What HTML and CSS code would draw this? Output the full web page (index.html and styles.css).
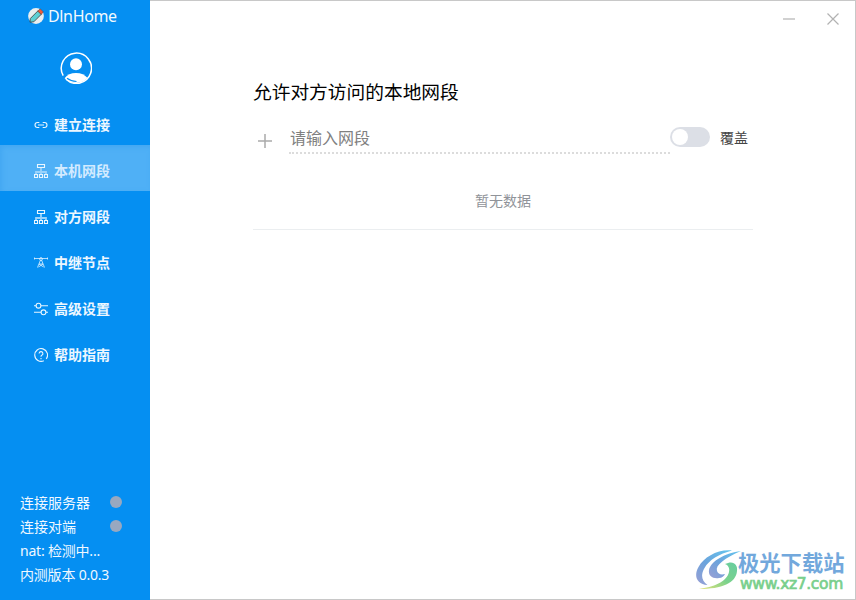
FILE: index.html
```html
<!DOCTYPE html>
<html lang="zh-CN">
<head>
<meta charset="utf-8">
<title>DlnHome</title>
<link rel="stylesheet" href="styles.css">
</head>
<body>
<div class="app">
  <aside class="sidebar">
    <div class="brand">
      <svg class="brand-logo" viewBox="0 0 16 16">
        <circle cx="8" cy="8" r="7.900" fill="#e9eff0"/>
        <path d="M2.300 10.500 10 2.800l3.400 3.400-7.600 7.600-3.800.4z" fill="#5ed0d4" stroke="#3c3b3b" stroke-width=".8"/>
        <path d="M9.700 3.100 12.200.9l3 3-2 2.600z" fill="#ef5b3c" stroke="#6c3b2b" stroke-width=".6"/>
      </svg>
      <span class="brand-name">DlnHome</span>
    </div>
    <svg class="avatar" viewBox="0 0 32 32">
      <path d="M3.200 23.600A15.100 15.100 0 1 1 6 27.200" fill="none" stroke="#fff" stroke-width="1.500"/>
      <circle cx="16" cy="12.200" r="6" fill="#fff"/>
      <path d="M4.600 26.200C7 22.800 11 20.900 16 20.900s9 1.900 11.600 5.200C24.700 29.300 20.500 31 16 31S7.300 29.300 4.600 26.200z" fill="#fff"/>
      <path d="M7 26.300c2.500 2 5.500 3 9.500 3.200" fill="none" stroke="#058ff2" stroke-width="1.200"/>
    </svg>
    <nav class="menu">
      <a class="item"><svg class="icon" viewBox="0 0 14 14"><path d="M5.300 4.500H3.500a2.500 2.500 0 0 0 0 5h1.800M8.700 4.500h1.800a2.500 2.500 0 0 1 0 5H8.700M4 7h6"/></svg>建立连接</a>
      <a class="item active"><svg class="icon" viewBox="0 0 14 14"><path class="dim" d="M7 4v6M2 10V8h10v2"/><path d="M3.500 .5h7v3h-7zM.5 10.500h3v3h-3zM5.500 10.500h3v3h-3zM10.500 10.500h3v3h-3z"/></svg>本机网段</a>
      <a class="item"><svg class="icon" viewBox="0 0 14 14"><path class="dim" d="M7 4v6M2 10V8h10v2"/><path d="M3.500 .5h7v3h-7zM.5 10.500h3v3h-3zM5.500 10.500h3v3h-3zM10.500 10.500h3v3h-3z"/></svg>对方网段</a>
      <a class="item"><svg class="icon thin" viewBox="0 0 14 14"><path d="M0 2.500h14M.5 1.500v2M13.500 1.500v2M6.500 4 3.500 11.500M7.500 4l3 7.500M5 8l4.500 3M9 8l-4.500 3M5 8h4"/><circle cx="7" cy="3" r="1.400"/></svg>中继节点</a>
      <a class="item"><svg class="icon" viewBox="0 0 14 14"><path d="M0 3.700h2M7 3.700h7M0 10.300h7M12 10.300h2"/><circle cx="4.500" cy="3.700" r="2.400"/><circle cx="9.500" cy="10.300" r="2.400"/></svg>高级设置</a>
      <a class="item"><svg class="icon" viewBox="0 0 14 14"><path d="M12.200 10.900A6.400 6.400 0 1 0 9.800 12.800"/><path d="M5.100 5.500a1.900 1.900 0 1 1 2.600 1.800Q7 7.600 7 8.800M7 10v1.200"/></svg>帮助指南</a>
    </nav>
    <div class="status">
      <div class="row"><span>连接服务器</span><i class="dot"></i></div>
      <div class="row"><span>连接对端</span><i class="dot"></i></div>
      <div class="row">nat: 检测中...</div>
      <div class="row">内测版本 0.0.3</div>
    </div>
  </aside>
  <main class="main">
    <div class="controls">
      <svg class="minimize" viewBox="0 0 12 12"><path d="M0 6h12"/></svg>
      <svg class="close" viewBox="0 0 12 12"><path d="m.5.5 11 11m0-11-11 11"/></svg>
    </div>
    <section class="content">
      <h3 class="title">允许对方访问的本地网段</h3>
      <div class="form">
        <svg class="add" viewBox="0 0 14 14"><path d="M0 7h14M7 0v14"/></svg>
        <input class="field" type="text" placeholder="请输入网段">
        <span class="switch"></span>
        <span class="switch-label">覆盖</span>
      </div>
      <div class="empty">暂无数据</div>
    </section>
  </main>
  <div class="watermark">
    <svg class="swirl" viewBox="0 0 46 42">
      <defs>
        <linearGradient id="blue" x1="0" y1="1" x2="1" y2="0"><stop offset="0" stop-color="#9a9fd4"/><stop offset=".45" stop-color="#6ba3dc"/><stop offset="1" stop-color="#65c6ee"/></linearGradient>
        <linearGradient id="green" x1="0" y1="1" x2="1" y2="0"><stop offset="0" stop-color="#e9e37a"/><stop offset=".5" stop-color="#7bd28c"/><stop offset="1" stop-color="#68cda0"/></linearGradient>
      </defs>
      <path d="M36 1.500C22 0 8 8 2.500 18c-5 9-2 17 9 18-6-4-7-10-3-17C13 11 23 5 36 1.500z" fill="url(#blue)"/>
      <path d="M45 2C29 4 15 12 13 21c-1 6 4 9 10 8 3 0 5-2 6-4-4 1-7 0-8-3C19 16 29 9 45 2z" fill="url(#blue)"/>
      <path d="M29 15c8-4 13 0 12 7-1 12-15 18-38 18 14-2 28-7 30-17 1-4-1-7-4-8z" fill="url(#green)"/>
    </svg>
    <div class="mark-text">
      <div class="mark-name">极光下载站</div>
      <div class="mark-url">www.xz7.com</div>
    </div>
  </div>
</div>
</body>
</html>
```
FILE: styles.css
```css
* { box-sizing: border-box; }
body {
  margin: 0;
  font-family: "Noto Sans", "Noto Sans CJK SC", sans-serif;
  font-size: 14px;
}
.app { position: relative; display: flex; width: 856px; height: 600px; overflow: hidden; }
.sidebar {
  display: flex;
  flex-direction: column;
  width: 150px;
  background: #058ff2;
  color: #fff;
}
.brand { display: flex; align-items: center; gap: 4px; height: 32px; padding-left: 28px; }
.brand-logo { width: 16px; height: 16px; }
.brand-name { font-size: 16px; line-height: 32px; letter-spacing: -.35px; opacity: .95; }
.avatar { width: 32px; height: 32px; margin: 20px 0 15px 60px; }
.menu { display: flex; flex-direction: column; }
.item {
  display: flex;
  align-items: center;
  gap: 6px;
  height: 46px;
  padding: 6px 0 0 34px;
  color: #edf7ff;
  font-weight: 700;
  line-height: 20px;
}
.active { background: #4fb0f6; color: #d3ebff; box-shadow: inset 2px 2px 5px #42a7f2; }
.icon { width: 14px; height: 14px; fill: none; stroke: #eaf6ff; stroke-width: 1.1; }
.thin { stroke-width: .75; }
.dim { stroke: #9bd3fb; stroke-width: 1.8; }
.status { margin-top: auto; padding: 0 0 13px 20px; }
.row { display: flex; align-items: center; height: 24px; line-height: 24px; color: #f0f8ff; letter-spacing: -.2px; white-space: pre; }
.row span { width: 90px; letter-spacing: 0; }
.dot { width: 12px; height: 12px; border-radius: 50%; background: #98a8c0; margin-top: -2px; }
.main { flex: 1; border: 1px solid #c8c8c8; border-left: 0; background: #fff; }
.controls { display: flex; justify-content: flex-end; gap: 32px; padding: 12px 16px 0 0; height: 25px; }
.controls svg { width: 12px; height: 12px; fill: none; stroke: #b2b2b2; stroke-width: 1.2; }
.content { width: 500px; margin: 52px 0 0 103px; }
.title { margin: 0; font-size: 18.72px; font-weight: 400; line-height: 28px; color: #000; }
.form { display: flex; align-items: center; height: 48px; }
.add { width: 14px; height: 14px; margin: 28px 17px 0 5px; align-self: flex-start; fill: none; stroke: #aaa; stroke-width: 1.5; }
.field {
  width: 381px;
  height: 32px;
  margin-top: 16px;
  padding: 2px 0 0 1px;
  border: 0;
  border-bottom: 2px dotted #dcdcdc;
  outline: 0;
  font: 16px "Noto Sans", "Noto Sans CJK SC", sans-serif;
}
.field::placeholder { color: #808080; }
.switch { width: 40px; height: 20px; margin-top: 14px; padding: 2px; border-radius: 10px; background: #dcdfe6; }
.switch::before { content: ""; display: block; width: 16px; height: 16px; border-radius: 50%; background: #fff; }
.switch-label { margin: 15px 0 0 10px; line-height: 20px; color: #444; }
.empty {
  height: 76px;
  border-bottom: 1px solid #ebeef0;
  line-height: 94px;
  color: #909399;
  text-align: center;
}
.watermark { position: absolute; left: 696px; top: 549px; display: flex; }
.swirl { width: 46px; height: 42px; margin-right: -4px; }
.mark-text { white-space: nowrap; }
.mark-name { font: 700 21.3px/25px "Noto Sans CJK SC", sans-serif; color: #72a8dc; }
.mark-url { padding: 1px 0 0 2px; font: 400 15.5px/18px "DejaVu Sans", sans-serif; letter-spacing: -.35px; color: #79cf8c; -webkit-text-stroke: .7px #79cf8c; }
```
